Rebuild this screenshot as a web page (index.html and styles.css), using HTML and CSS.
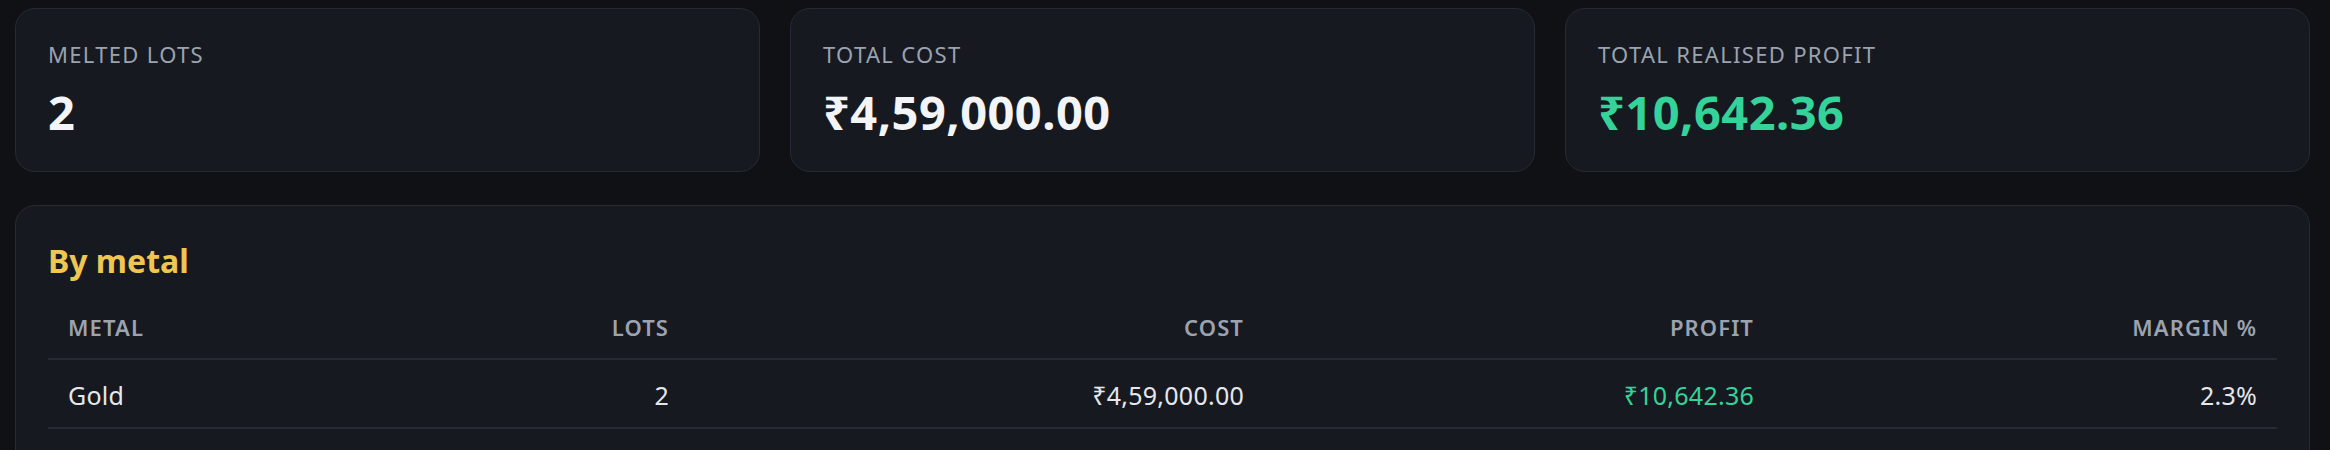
FILE: index.html
```html
<!DOCTYPE html>
<html lang="en">
<head>
<meta charset="utf-8">
<title>Melted lots</title>
<link rel="stylesheet" href="styles.css">
</head>
<body>
<main class="page">
  <section class="stats">
    <div class="card">
      <div class="card-label">Melted lots</div>
      <div class="card-value">2</div>
    </div>
    <div class="card">
      <div class="card-label">Total cost</div>
      <div class="card-value">₹4,59,000.00</div>
    </div>
    <div class="card">
      <div class="card-label">Total realised profit</div>
      <div class="card-value positive">₹10,642.36</div>
    </div>
  </section>
  <section class="panel">
    <h2 class="panel-title">By metal</h2>
    <table class="table">
      <colgroup>
        <col class="c1"><col class="c2"><col class="c3"><col class="c4"><col class="c5">
      </colgroup>
      <thead>
        <tr>
          <th class="left">Metal</th>
          <th>Lots</th>
          <th>Cost</th>
          <th>Profit</th>
          <th>Margin %</th>
        </tr>
      </thead>
      <tbody>
        <tr>
          <td class="left">Gold</td>
          <td>2</td>
          <td>₹4,59,000.00</td>
          <td class="positive">₹10,642.36</td>
          <td>2.3%</td>
        </tr>
      </tbody>
    </table>
  </section>
</main>
</body>
</html>
```

FILE: styles.css
```css
html, body {
  margin: 0;
  padding: 0;
  background: #0f1115;
}

body {
  font-family: "Noto Sans", "Open Sans", sans-serif;
  color: #e5e7eb;
}

.page {
  padding: 8px 20px 0 15px;
}

.stats {
  display: grid;
  grid-template-columns: repeat(3, 1fr);
  gap: 30px;
}

.card {
  background: #161920;
  border: 1px solid #262a34;
  border-radius: 20px;
  padding: 30px 32px 31px;
}

.card-label {
  font-size: 22px;
  line-height: 30px;
  letter-spacing: 0.06em;
  text-transform: uppercase;
  color: #9aa3af;
}

.card-value {
  margin-top: 15px;
  font-size: 47px;
  line-height: 56px;
  font-weight: 700;
  letter-spacing: 0.01em;
  color: #f3f4f6;
}

.positive {
  color: #34d399;
}

.card-value.positive {
  color: #34d399;
}

.panel {
  margin-top: 33px;
  background: #161920;
  border: 1px solid #262a34;
  border-radius: 20px;
  padding: 35px 32px 40px;
  min-height: 300px;
}

.panel-title {
  margin: 0 0 14px;
  font-size: 32px;
  line-height: 40px;
  font-weight: 700;
  color: #f0c652;
}

.table {
  width: 100%;
  border-collapse: collapse;
  table-layout: fixed;
}

.c1 { width: 320px; }
.c2 { width: 321px; }
.c3 { width: 575px; }
.c4 { width: 510px; }
.c5 { width: auto; }

.table th {
  font-size: 22px;
  line-height: 30px;
  font-weight: 600;
  letter-spacing: 0.05em;
  text-transform: uppercase;
  color: #9ca3af;
  text-align: right;
  padding: 17px 20px 16px;
  border-bottom: 2px solid #262a33;
}

.table td {
  font-size: 25px;
  line-height: 34px;
  letter-spacing: 0.01em;
  color: #e5e7eb;
  text-align: right;
  padding: 18px 20px 15px;
  border-bottom: 2px solid #262a33;
}

.table td.positive {
  color: #34d399;
}

.table .left {
  text-align: left;
}
```
